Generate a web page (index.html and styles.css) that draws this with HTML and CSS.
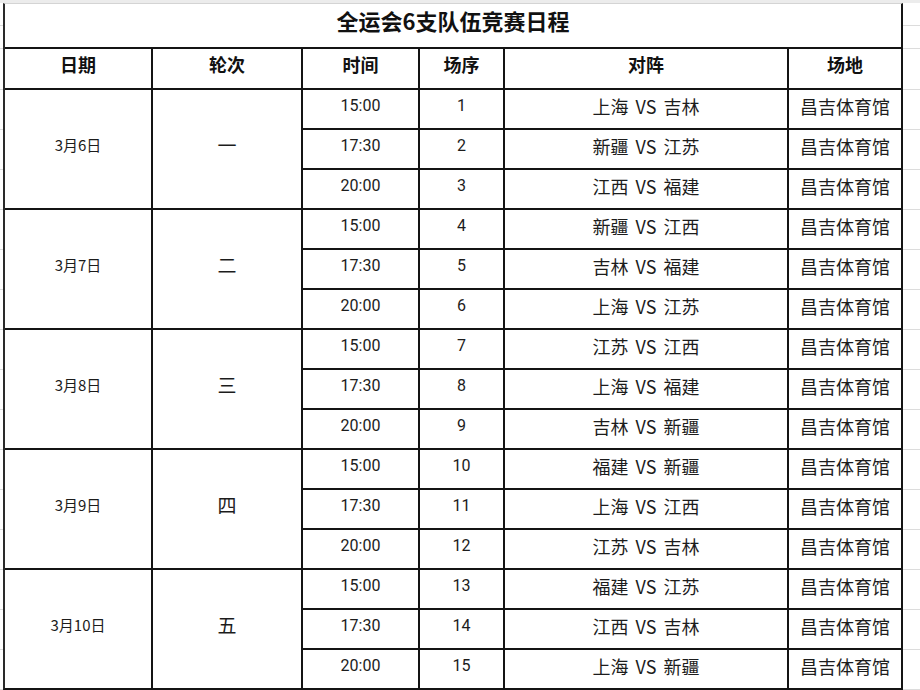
FILE: index.html
```html
<!DOCTYPE html>
<html lang="zh-CN">
<head>
<meta charset="utf-8">
<title>全运会6支队伍竞赛日程</title>
<link rel="stylesheet" href="styles.css">
</head>
<body>
<div class="sheet">
  <div class="title">全运会6支队伍竞赛日程</div>

  <div class="head">日期</div>
  <div class="head">轮次</div>
  <div class="head">时间</div>
  <div class="head">场序</div>
  <div class="head">对阵</div>
  <div class="head">场地</div>

  <div class="date">3月6日</div>
  <div class="round">一</div>
  <div class="time">15:00</div><div class="seq">1</div><div class="match">上海 VS 吉林</div><div class="venue">昌吉体育馆</div>
  <div class="time">17:30</div><div class="seq">2</div><div class="match">新疆 VS 江苏</div><div class="venue">昌吉体育馆</div>
  <div class="time">20:00</div><div class="seq">3</div><div class="match">江西 VS 福建</div><div class="venue">昌吉体育馆</div>

  <div class="date">3月7日</div>
  <div class="round">二</div>
  <div class="time">15:00</div><div class="seq">4</div><div class="match">新疆 VS 江西</div><div class="venue">昌吉体育馆</div>
  <div class="time">17:30</div><div class="seq">5</div><div class="match">吉林 VS 福建</div><div class="venue">昌吉体育馆</div>
  <div class="time">20:00</div><div class="seq">6</div><div class="match">上海 VS 江苏</div><div class="venue">昌吉体育馆</div>

  <div class="date">3月8日</div>
  <div class="round">三</div>
  <div class="time">15:00</div><div class="seq">7</div><div class="match">江苏 VS 江西</div><div class="venue">昌吉体育馆</div>
  <div class="time">17:30</div><div class="seq">8</div><div class="match">上海 VS 福建</div><div class="venue">昌吉体育馆</div>
  <div class="time">20:00</div><div class="seq">9</div><div class="match">吉林 VS 新疆</div><div class="venue">昌吉体育馆</div>

  <div class="date">3月9日</div>
  <div class="round">四</div>
  <div class="time">15:00</div><div class="seq">10</div><div class="match">福建 VS 新疆</div><div class="venue">昌吉体育馆</div>
  <div class="time">17:30</div><div class="seq">11</div><div class="match">上海 VS 江西</div><div class="venue">昌吉体育馆</div>
  <div class="time">20:00</div><div class="seq">12</div><div class="match">江苏 VS 吉林</div><div class="venue">昌吉体育馆</div>

  <div class="date">3月10日</div>
  <div class="round">五</div>
  <div class="time">15:00</div><div class="seq">13</div><div class="match">福建 VS 江苏</div><div class="venue">昌吉体育馆</div>
  <div class="time">17:30</div><div class="seq">14</div><div class="match">江西 VS 吉林</div><div class="venue">昌吉体育馆</div>
  <div class="time">20:00</div><div class="seq">15</div><div class="match">上海 VS 新疆</div><div class="venue">昌吉体育馆</div>
</div>
</body>
</html>
```
FILE: styles.css
```css
html {
  background-color: #ffffff;
  background-image:
    linear-gradient(#ececec, #ececec),
    linear-gradient(#dcdcdc, #dcdcdc),
    linear-gradient(#dcdcdc, #dcdcdc),
    repeating-linear-gradient(to bottom, #dcdcdc 0 1px, transparent 1px 40px);
  background-size: 100% 3px, 100% 1px, 100% 1px, 100% 100%;
  background-position: 0 0, 0 25px, 0 48px, 0 89px;
  background-repeat: no-repeat;
  min-height: 100%;
}

body {
  margin: 0;
  padding: 3px 0 0 3px;
  font-family: "Noto Sans CJK SC", "Noto Sans", sans-serif;
  color: #1c1c1c;
}

.sheet {
  width: 900px;
  box-sizing: border-box;
  display: grid;
  grid-template-columns: 146px 148px 115px 83px 282px 112px;
  grid-template-rows: 43px 39px repeat(15, 38px);
  gap: 2px;
  background: #141414;
  border-top: 1px solid #d4d4d4;
  border-left: 2px solid #2a2a2a;
  border-right: 2px solid #141414;
  border-bottom: 2px solid #141414;
}

.sheet > div {
  background: #ffffff;
  display: flex;
  align-items: center;
  justify-content: center;
  white-space: nowrap;
}

.title {
  grid-column: 1 / -1;
  font-size: 22px;
  font-weight: 700;
  color: #111;
  padding-bottom: 12px;
}

.head {
  font-size: 18px;
  font-weight: 700;
  color: #111;
  padding-bottom: 9px;
}

.date {
  grid-row: span 3;
  font-size: 15px;
  padding-bottom: 10px;
}

.round {
  grid-row: span 3;
  font-size: 19px;
  padding-bottom: 10px;
}

.time {
  font-size: 16px;
  font-family: "Roboto", "Noto Sans", sans-serif;
  padding-bottom: 7px;
}

.seq {
  font-size: 16px;
  font-family: "Roboto", "Noto Sans", sans-serif;
  padding-bottom: 7px;
}

.match {
  font-size: 18px;
  word-spacing: 3px;
  padding-bottom: 7px;
}

.venue {
  font-size: 18px;
  padding-bottom: 7px;
}
```
